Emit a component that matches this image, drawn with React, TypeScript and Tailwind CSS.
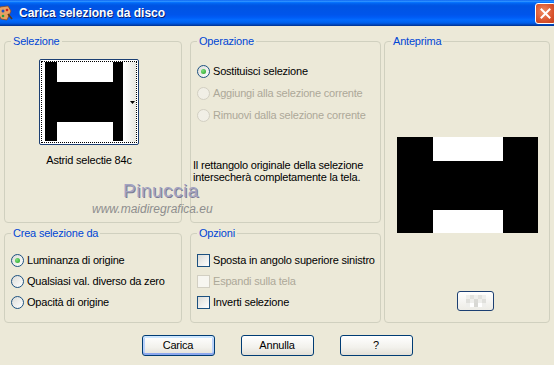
import React from 'react'

const font = "font-['Liberation_Sans',Arial,sans-serif]"

function Group({ title, className, children }: { title: string; className: string; children?: React.ReactNode }) {
  return (
    <div className={`relative pt-[6px] ${className}`}>
      <span className="absolute left-[7px] top-0 px-[2px] bg-[#ECE9D8] leading-[13px] text-[#0046D5]">{title}</span>
      <div className="h-full border border-[#D0D0BF] rounded-[4px]">{children}</div>
    </div>
  )
}

function Radio({ label, checked, disabled }: { label: string; checked?: boolean; disabled?: boolean }) {
  return (
    <div className="h-[21px] flex items-center gap-[3px]">
      <span
        className={`w-[13px] h-[13px] rounded-full border flex items-center justify-center ${
          disabled
            ? 'border-[#D2CFC2] bg-[#F1EFE6]'
            : 'border-[#1C5180] bg-[linear-gradient(135deg,#DCDCD7,#FFFFFF)]'
        }`}
      >
        {checked && <span className="w-[5px] h-[5px] rounded-full bg-[radial-gradient(circle_at_35%_35%,#7FE07F,#21A121)]" />}
      </span>
      <span className={disabled ? 'text-[#ACA899]' : ''}>{label}</span>
    </div>
  )
}

function Check({ label, disabled }: { label: string; disabled?: boolean }) {
  return (
    <div className="h-[21px] flex items-center gap-[3px]">
      <span
        className={`w-[13px] h-[13px] border ${
          disabled ? 'border-[#D2CFC2] bg-[#F7F6F0]' : 'border-[#1C5180] bg-[linear-gradient(135deg,#DCDCD7,#FFFFFF)]'
        }`}
      />
      <span className={disabled ? 'text-[#ACA899]' : ''}>{label}</span>
    </div>
  )
}

function Button({ label, primary }: { label: string; primary?: boolean }) {
  return (
    <button
      className={`w-[73px] h-[21px] border border-[#003C74] rounded-[3px] bg-[linear-gradient(180deg,#FFFFFF,#F2F1EC_60%,#E3E0D7)] leading-none ${
        primary ? 'shadow-[inset_0_2px_0_#CEE7FF,inset_0_-2px_0_#8DA8EE,inset_2px_0_0_#B9D1FA,inset_-2px_0_0_#B9D1FA]' : ''
      }`}
    >
      {label}
    </button>
  )
}

export default function App() {
  return (
    <div className={`relative w-[554px] h-[365px] overflow-hidden bg-[#ECE9D8] text-[11px] tracking-[-0.2px] text-black ${font}`}>
      {/* title bar */}
      <div className="h-[26px] flex items-center justify-between bg-[linear-gradient(180deg,#0058EE_0%,#3593FF_4%,#288EFF_6%,#127DFF_8%,#036FFC_10%,#0262EE_14%,#0057E5_20%,#0054E3_24%,#0055EB_56%,#005BF5_66%,#026AFE_76%,#0062EF_86%,#0052D6_92%,#0040AB_96%,#003092_100%)]">
        <div className="flex items-center">
          <svg width="16" height="16" viewBox="0 0 16 16" className="-ml-[3px]">
            <path d="M3 2 L11 1 L14 6 L10 15 L4 14 L1 8 Z" fill="#E8A060" stroke="#8A4A20" strokeWidth="0.8" />
            <circle cx="6" cy="6" r="1.5" fill="#2050C0" />
            <circle cx="10" cy="5" r="1.3" fill="#D02020" />
            <circle cx="6" cy="11" r="1.3" fill="#20A040" />
            <path d="M11 9 L15 14" stroke="#5A3A1A" strokeWidth="1.6" />
          </svg>
          <span className="ml-[6px] text-white font-bold text-[12px] tracking-[0px] [text-shadow:1px_1px_0_#0A1E6E]">
            Carica selezione da disco
          </span>
        </div>
        <div className="w-[21px] h-[21px] -mr-[2px] rounded-[3px] border border-white bg-[radial-gradient(circle_at_40%_40%,#F08A62,#D8522C_60%,#C03A18)] flex items-center justify-center">
          <svg width="11" height="11" viewBox="0 0 11 11">
            <path d="M1.5 1.5 L9.5 9.5 M9.5 1.5 L1.5 9.5" stroke="white" strokeWidth="2" strokeLinecap="square" />
          </svg>
        </div>
      </div>

      {/* groups */}
      <div className="flex pl-[4px] pt-[9px]">
        <div className="w-[178px] flex flex-col">
          <Group title="Selezione" className="h-[188px]">
            <div className="ml-[34px] mt-[17px] w-[100px] h-[86px] border border-[#1C3F72] rounded-[2px] bg-white p-[1px]">
              <div className="h-full border border-dotted border-black flex pl-[3px]">
                <svg width="78" height="79" viewBox="0 0 78 79" className="shrink-0">
                  <rect width="78" height="79" fill="#000" />
                  <rect x="12" y="0" width="56" height="20" fill="#fff" />
                  <rect x="12" y="60" width="56" height="19" fill="#fff" />
                </svg>
                <div className="flex-1 flex items-center justify-end pr-[1px] bg-[linear-gradient(90deg,#FFFFFF,#E8E8E2)]">
                  <svg width="5" height="3" viewBox="0 0 5 3">
                    <path d="M0 0 H5 L2.5 3 Z" fill="#000" />
                  </svg>
                </div>
              </div>
            </div>
            <div className="ml-[34px] w-[100px] mt-[9px] text-center leading-[13px]">Astrid selectie 84c</div>
          </Group>
          <Group title="Crea selezione da" className="h-[96px] mt-[4px]">
            <div className="ml-[6px] mt-[16px]">
              <Radio label="Luminanza di origine" checked />
              <Radio label="Qualsiasi val. diverso da zero" />
              <Radio label="Opacità di origine" />
            </div>
          </Group>
        </div>

        <div className="w-[191px] ml-[8px] flex flex-col">
          <Group title="Operazione" className="h-[188px]">
            <div className="ml-[6px] mt-[18px] flex flex-col">
              <div className="h-[22px] flex items-center"><Radio label="Sostituisci selezione" checked /></div>
              <div className="h-[22px] flex items-center"><Radio label="Aggiungi alla selezione corrente" disabled /></div>
              <div className="h-[22px] flex items-center"><Radio label="Rimuovi dalla selezione corrente" disabled /></div>
            </div>
            <p className="pl-[2px] mt-[33px] leading-[12px]">
              Il rettangolo originale della selezione
              <br />
              intersecherà completamente la tela.
            </p>
          </Group>
          <Group title="Opzioni" className="h-[96px] mt-[4px]">
            <div className="ml-[6px] mt-[16px]">
              <Check label="Sposta in angolo superiore sinistro" />
              <Check label="Espandi sulla tela" disabled />
              <Check label="Inverti selezione" />
            </div>
          </Group>
        </div>

        <Group title="Anteprima" className="w-[166px] ml-[3px] h-[288px]">
          <svg width="141" height="96" viewBox="0 0 141 96" className="ml-[12px] mt-[95px] block">
            <rect width="141" height="96" fill="#000" />
            <rect x="36" y="0" width="70" height="24" fill="#fff" />
            <rect x="36" y="73" width="70" height="23" fill="#fff" />
          </svg>
          <div className="ml-[72px] mt-[58px] w-[37px] h-[20px] border border-[#1C3F72] rounded-[3px] bg-[linear-gradient(180deg,#FFFFFF,#EDECE6)] flex items-center justify-center">
            <svg width="20" height="12" viewBox="0 0 20 12">
              <rect x="0" y="0" width="20" height="12" fill="#EFEFEC" />
              <rect x="4" y="0" width="4" height="4" fill="#E2E2DE" />
              <rect x="12" y="0" width="4" height="4" fill="#E2E2DE" />
              <rect x="0" y="4" width="4" height="4" fill="#E0E0DC" />
              <rect x="8" y="4" width="4" height="4" fill="#DADAD6" />
              <rect x="16" y="4" width="4" height="4" fill="#E0E0DC" />
              <rect x="4" y="8" width="4" height="4" fill="#FFFFFF" />
              <rect x="8" y="8" width="4" height="4" fill="#D8D8D4" />
              <rect x="12" y="8" width="4" height="4" fill="#FFFFFF" />
            </svg>
          </div>
        </Group>
      </div>

      {/* buttons */}
      <div className="mt-[12px] flex justify-center gap-[26px]">
        <Button label="Carica" primary />
        <Button label="Annulla" />
        <Button label="?" />
      </div>

      {/* watermark */}
      <span className="absolute left-[123px] top-[181px] text-[19px] leading-none tracking-[0.5px] text-[#A3A3C2] [text-shadow:1px_1px_0_#7C7C94]">
        Pinuccia
      </span>
      <span className="absolute left-[92px] top-[203px] text-[12px] leading-none italic tracking-[0px] text-[#8E8E8E]">
        www.maidiregrafica.eu
      </span>
    </div>
  )
}
